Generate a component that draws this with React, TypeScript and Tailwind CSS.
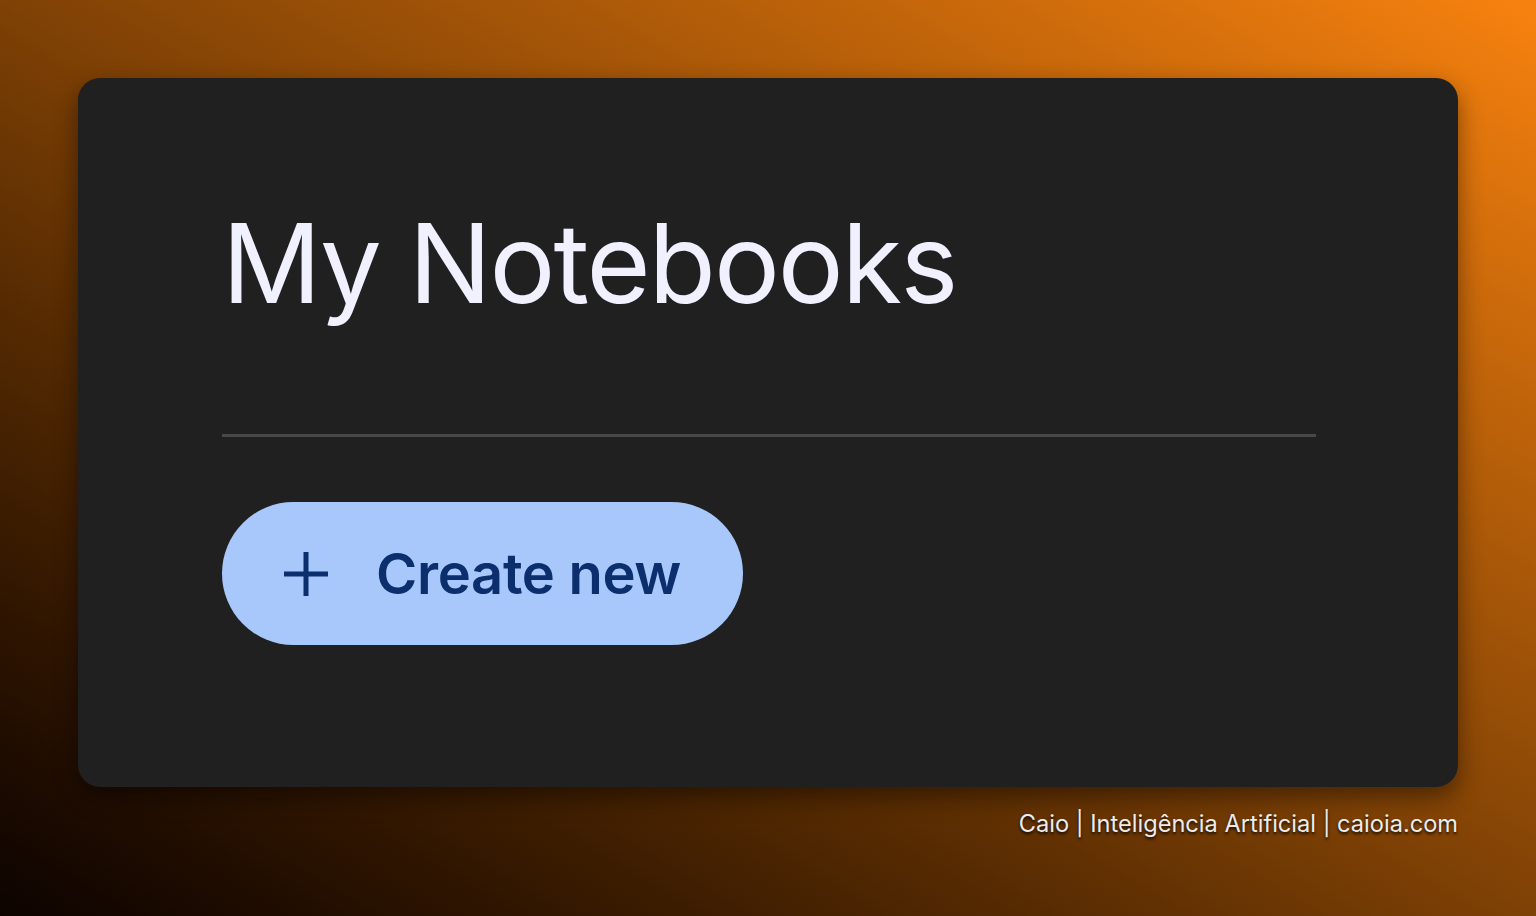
import * as React from 'react';

export default function App() {
  return <div className="w-[1536px] h-[916px] overflow-hidden bg-linear-to-tr from-[#0d0400] via-[#7f4105] to-[#f8820f] font-['Inter',sans-serif]">
    <div className="pt-[78px] pl-[78px]">
      <div className="w-[1380px] h-[709px] rounded-[22px] bg-[#202020] shadow-[0_10px_24px_rgba(0,0,0,0.45)] pl-[144px] pr-[142px] pt-[130px]">
        <h1 className="text-[110px] leading-none font-normal tracking-[-2px] text-[#f0f0ff]">
          My Notebooks
        </h1>

        <div className="mt-[116px] h-[3px] bg-[#484848]"></div>

        <button className="mt-[65px] w-[521px] h-[143px] rounded-full bg-[#a8c7fa] flex items-center pl-[62px] text-[#0b2e6d]">
          <svg width="44" height="44" viewBox="0 0 44 44" fill="none" stroke="currentColor" strokeWidth="5">
            <path d="M22 0v44M0 22h44" />
          </svg>
          <span className="ml-[48px] text-[56px] font-semibold leading-none tracking-[-0.3px]">Create new</span>
        </button>
      </div>
    </div>

    <div className="w-[1458px] mt-[19px] text-right text-[23.6px] text-[#ececec] [text-shadow:0_2px_3px_rgba(0,0,0,0.85)]">
      Caio | Inteligência Artificial | caioia.com
    </div>
  </div>
}
